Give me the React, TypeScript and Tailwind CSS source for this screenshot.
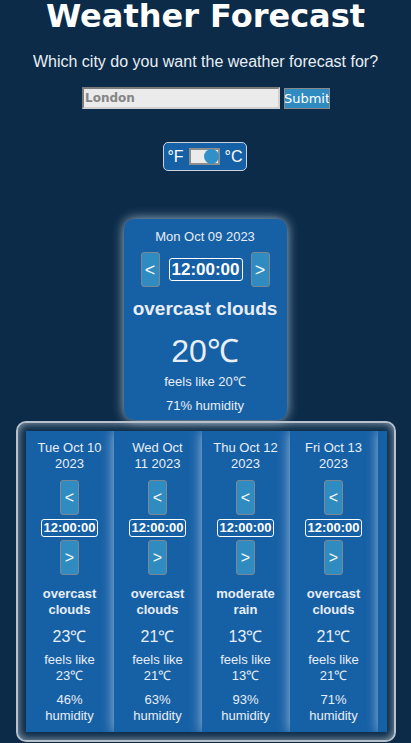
import React from "react";

const arial = { fontFamily: '"Liberation Sans", Arial, sans-serif' };

type Day = {
  date: string[];
  desc: string[];
  temp: string;
  feels: string;
  hum: string;
};

const days: Day[] = [
  { date: ["Tue Oct 10", "2023"], desc: ["overcast", "clouds"], temp: "23℃", feels: "23℃", hum: "46%" },
  { date: ["Wed Oct", "11 2023"], desc: ["overcast", "clouds"], temp: "21℃", feels: "21℃", hum: "63%" },
  { date: ["Thu Oct 12", "2023"], desc: ["moderate", "rain"], temp: "13℃", feels: "13℃", hum: "93%" },
  { date: ["Fri Oct 13", "2023"], desc: ["overcast", "clouds"], temp: "21℃", feels: "21℃", hum: "71%" },
];

function SmallCard({ d }: { d: Day }) {
  return (
    <div
      className="w-[88px] shrink-0 bg-[#1660a5] text-[#e8eef5] flex flex-col items-center text-center pt-[9px] pb-[8px] shadow-[0_0_12px_rgba(210,225,240,0.75)]"
      style={arial}
    >
      <div className="text-[13px] leading-[16px]">
        {d.date[0]}
        <br />
        {d.date[1]}
      </div>
      <button className="mt-[8px] w-[19px] h-[35px] bg-[#2f8bc0] border border-[#7d8793] rounded-[3px] text-white text-[16px] leading-none flex items-center justify-center">
        &lt;
      </button>
      <div className="mt-[4px] h-[18px] px-[1px] border border-white rounded-[3px] text-white font-bold text-[13px] leading-[16px] flex items-center">
        12:00:00
      </div>
      <button className="mt-[3px] w-[19px] h-[35px] bg-[#2f8bc0] border border-[#7d8793] rounded-[3px] text-white text-[16px] leading-none flex items-center justify-center">
        &gt;
      </button>
      <div className="mt-[11px] font-bold text-[13px] leading-[16px]">
        {d.desc[0]}
        <br />
        {d.desc[1]}
      </div>
      <div className="mt-[10px] text-[16px] leading-[18px]">{d.temp}</div>
      <div className="mt-[6px] text-[13px] leading-[16px]">
        feels like
        <br />
        {d.feels}
      </div>
      <div className="mt-[8px] text-[13px] leading-[16px]">
        {d.hum}
        <br />
        humidity
      </div>
    </div>
  );
}

export default function App() {
  return (
    <div className="min-h-[743px] w-full bg-[#0b2b48] text-[#eef3f8] flex flex-col items-center">
      <h1
        className="m-0 text-[32px] leading-[37px] mt-[-2px] font-bold text-white"
        style={{ fontFamily: '"DejaVu Sans", sans-serif' }}
      >
        Weather Forecast
      </h1>
      <p className="mt-[18px] text-[16px] leading-[18px] text-[#e8eef5]" style={arial}>
        Which city do you want the weather forecast for?
      </p>
      <div className="mt-[16px] flex items-start gap-[4px] ml-[1px]">
        <input
          className="w-[198px] h-[22px] bg-[#ebebeb] border-2 border-t-[#7b7b7b] border-l-[#7b7b7b] border-b-[#d0d0d0] border-r-[#d0d0d0] px-[1px] text-[12px] font-bold text-[#858585] placeholder:text-[#858585] outline-none"
          style={{ fontFamily: '"DejaVu Sans", sans-serif' }}
          placeholder="London"
        />
        <button
          className="mt-[1px] w-[46px] h-[21px] bg-[#2f8bc0] border border-[#8a8a8a] text-white text-[13px] leading-none flex items-center justify-center px-0 overflow-hidden"
          style={{ fontFamily: '"DejaVu Sans", sans-serif' }}
        >
          Submit
        </button>
      </div>
      <div
        className="mt-[33px] w-[84px] h-[29px] bg-[#1660a5] border border-[#c9d2db] rounded-[5px] flex items-center justify-center gap-[5px] text-white text-[16px] ml-[-1px]"
        style={arial}
      >
        <span>°F</span>
        <div className="w-[31px] h-[17px] bg-[#ebebeb] border-2 border-[#8d8d8d] flex items-center justify-end">
          <div className="w-[15px] h-[15px] rounded-full bg-[#3190c7] mr-[-1px]" />
        </div>
        <span>°C</span>
      </div>
      <div
        className="mt-[48px] w-[163px] bg-[#1660a5] rounded-[10px] text-[#e8eef5] flex flex-col items-center text-center pt-[10px] pb-[7px] shadow-[0_0_12px_rgba(210,225,240,0.8)] ml-[-1px]"
        style={arial}
      >
        <div className="text-[13px] leading-[15px]">Mon Oct 09 2023</div>
        <div className="mt-[8px] flex items-center">
          <button className="w-[19px] h-[35px] bg-[#2f8bc0] border border-[#7d8793] rounded-[3px] text-white text-[18px] leading-none flex items-center justify-center">
            &lt;
          </button>
          <div className="ml-[9px] mr-[8px] w-[74px] h-[23px] border border-white rounded-[3px] text-white font-bold text-[17px] leading-[21px] flex items-center justify-center">
            12:00:00
          </div>
          <button className="w-[19px] h-[35px] bg-[#2f8bc0] border border-[#7d8793] rounded-[3px] text-white text-[18px] leading-none flex items-center justify-center">
            &gt;
          </button>
        </div>
        <div className="mt-[11px] font-bold text-[19px] leading-[22px] whitespace-nowrap">overcast clouds</div>
        <div className="mt-[13px] text-[32px] leading-[37px]">20℃</div>
        <div className="mt-[4px] text-[13px] leading-[15px]">feels like 20℃</div>
        <div className="mt-[9px] text-[13px] leading-[15px]">71% humidity</div>
      </div>
      <div className="mt-[1px] w-[380px] border-2 border-[#b6c1cc] rounded-[10px] shadow-[inset_0_0_10px_rgba(220,230,240,0.7)] pt-[8px] pb-[8px] pl-[8px] pr-[7px]">
        <div className="w-[361px] overflow-hidden flex">
          {days.map((d, i) => (
            <SmallCard key={i} d={d} />
          ))}
          <div className="w-[9px] shrink-0 bg-[#1660a5] shadow-[0_0_12px_rgba(210,225,240,0.75)]" />
        </div>
      </div>
    </div>
  );
}
